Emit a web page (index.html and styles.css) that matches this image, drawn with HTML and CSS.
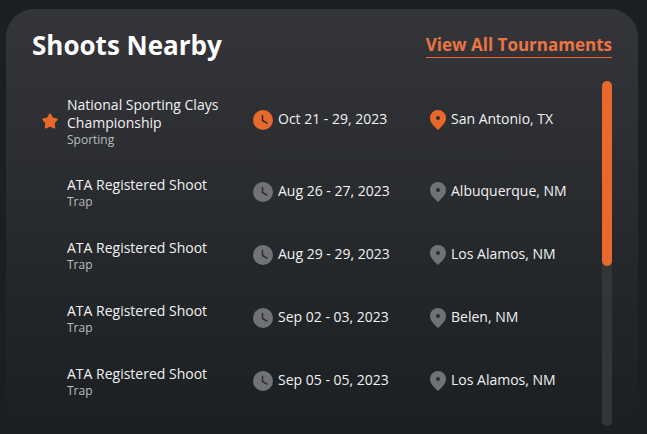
FILE: index.html
```html
<!DOCTYPE html>
<html lang="en">
<head>
  <meta charset="UTF-8" />
  <meta name="viewport" content="width=device-width, initial-scale=1.0"/>
  <title>Shoots Nearby</title>
  <link rel="stylesheet" href="styles.css">
</head>

<body>
  <!-- Shared icons -->
  <svg class="sprite" aria-hidden="true">
    <symbol id="star" viewBox="0 0 16 16">
      <path d="M8 1.400l2.300 4 4.400 1-3 3.500.5 4.600L8 12.700l-4.200 1.800.5-4.600-3-3.500 4.400-1z" fill="currentColor" stroke="currentColor" stroke-width="2" stroke-linejoin="round"/>
    </symbol>
    <symbol id="clock" viewBox="0 0 20 20">
      <circle cx="10" cy="10" r="10" fill="currentColor"/>
      <path d="M9.500 5.500v5l4.500 2.700" fill="none" stroke="#2b2d31" stroke-width="1.500" stroke-linecap="round" stroke-linejoin="round"/>
    </symbol>
    <symbol id="pin" viewBox="0 0 16 20">
      <path d="M8 0a8 8 0 0 0-8 8c0 5 4.500 8.500 8 12 3.500-3.500 8-7 8-12a8 8 0 0 0-8-8z" fill="currentColor"/>
      <circle cx="8" cy="8" r="2" fill="#2b2d31"/>
    </symbol>
  </svg>

  <div class="card">
    <div class="card-header">
      <h2>Shoots Nearby</h2>
      <a class="view-all" href="#">View All Tournaments</a>
    </div>

    <div class="card-body">
      <table class="shoots">
        <tr class="featured">
          <td class="mark"><svg class="star"><use href="#star"/></svg></td>
          <td class="name">National Sporting Clays Championship<span class="type">Sporting</span></td>
          <td class="date"><div class="info"><svg class="clock"><use href="#clock"/></svg>Oct 21 - 29, 2023</div></td>
          <td><div class="info"><svg class="pin"><use href="#pin"/></svg>San Antonio, TX</div></td>
        </tr>
        <tr>
          <td class="mark"></td>
          <td class="name">ATA Registered Shoot<span class="type">Trap</span></td>
          <td class="date"><div class="info"><svg class="clock"><use href="#clock"/></svg>Aug 26 - 27, 2023</div></td>
          <td><div class="info"><svg class="pin"><use href="#pin"/></svg>Albuquerque, NM</div></td>
        </tr>
        <tr>
          <td class="mark"></td>
          <td class="name">ATA Registered Shoot<span class="type">Trap</span></td>
          <td class="date"><div class="info"><svg class="clock"><use href="#clock"/></svg>Aug 29 - 29, 2023</div></td>
          <td><div class="info"><svg class="pin"><use href="#pin"/></svg>Los Alamos, NM</div></td>
        </tr>
        <tr>
          <td class="mark"></td>
          <td class="name">ATA Registered Shoot<span class="type">Trap</span></td>
          <td class="date"><div class="info"><svg class="clock"><use href="#clock"/></svg>Sep 02 - 03, 2023</div></td>
          <td><div class="info"><svg class="pin"><use href="#pin"/></svg>Belen, NM</div></td>
        </tr>
        <tr>
          <td class="mark"></td>
          <td class="name">ATA Registered Shoot<span class="type">Trap</span></td>
          <td class="date"><div class="info"><svg class="clock"><use href="#clock"/></svg>Sep 05 - 05, 2023</div></td>
          <td><div class="info"><svg class="pin"><use href="#pin"/></svg>Los Alamos, NM</div></td>
        </tr>
      </table>
      <div class="scroll-track"><div class="scroll-thumb"></div></div>
    </div>
  </div>
</body>
</html>
```

FILE: styles.css
```css
* {
  box-sizing: border-box;
}
body {
  margin: 0;
  padding: 9px 9px 0 6px;
  background: #1b1f21;
  color: #f1f1f2;
  font-family: "Open Sans", sans-serif;
  font-size: 14px;
  line-height: 18px;
}
.sprite {
  display: none;
}
.card {
  padding: 18px 26px 8px;
  border-radius: 28px 28px 0 0;
  background: linear-gradient(#34353a, #1b1f21);
}
.card-header {
  display: flex;
  justify-content: space-between;
  align-items: flex-start;
  margin-bottom: 18px;
}
.card-header h2 {
  margin: 0;
  color: #fff;
  font-size: 26px;
  line-height: 36px;
}
.view-all {
  margin-top: 6px;
  border-bottom: 1px solid #e9692c;
  color: #ec7442;
  font-size: 17px;
  font-weight: bold;
  line-height: 24px;
  text-decoration: none;
}
.card-body {
  display: flex;
}
.shoots {
  flex: 1;
  align-self: flex-start;
  border-collapse: collapse;
  table-layout: fixed;
}
.shoots td {
  padding: 12px 0 16px;
}
.shoots .mark {
  width: 35px;
  padding: 14px 0 14px 10px;
}
.shoots .name {
  width: 186px;
  padding: 15px 26px 14px 0;
}
.shoots .featured .name {
  padding-bottom: 13px;
}
.shoots .date {
  width: 177px;
}
.type {
  display: block;
  color: #b9bcc0;
  font-size: 12px;
  line-height: 16px;
}
.info {
  display: flex;
  align-items: center;
  gap: 5px;
  white-space: nowrap;
}
svg {
  display: block;
  flex: none;
  color: #707276;
}
.featured svg {
  color: #e9692c;
}
.info svg {
  margin-top: 2px;
}
.star {
  width: 16px;
  height: 16px;
}
.clock {
  width: 20px;
  height: 20px;
}
.pin {
  width: 16px;
  height: 20px;
}
.scroll-track {
  width: 10px;
  min-height: 345px;
  border-radius: 5px;
  background: #363536;
}
.scroll-thumb {
  height: 185px;
  border-radius: 5px;
  background: #e9692c;
}
```
